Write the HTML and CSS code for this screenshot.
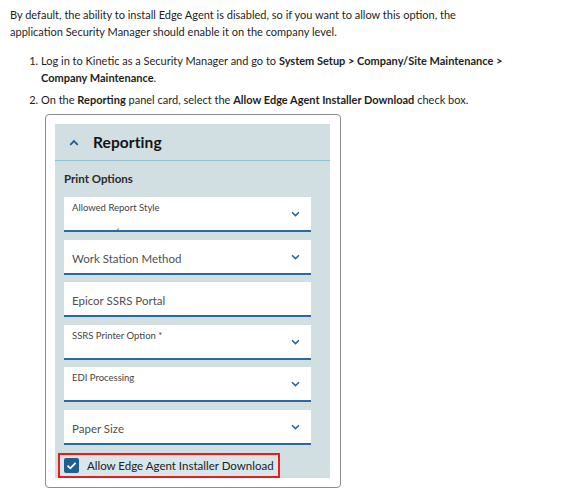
FILE: index.html
```html
<!DOCTYPE html>
<html lang="en">
<head>
<meta charset="utf-8">
<title>Edge Agent</title>
<link rel="stylesheet" href="styles.css">
</head>
<body>
<div class="doc">
<p class="intro">By default, the ability to install Edge Agent is disabled, so if you want to allow this option, the application Security Manager should enable it on the company level.</p>
<ol class="steps">
  <li class="step">Log in to Kinetic as a Security Manager and go to <b>System Setup &gt; Company/Site Maintenance &gt; Company Maintenance</b>.</li>
  <li class="step">
    <div>On the <b>Reporting</b> panel card, select the <b>Allow Edge Agent Installer Download</b> check box.</div>
    <div class="card">
      <div class="panel">
        <div class="panel-head">
          <svg class="caret-up" width="10" height="7" viewBox="0 0 10 7"><path d="M1.2 5.8 L5 2 L8.8 5.8" fill="none" stroke="#1f5f8f" stroke-width="1.8"/></svg>
          <span class="panel-title">Reporting</span>
        </div>
        <div class="panel-body">
          <div class="group-title">Print Options</div>
          <div class="fields">
            <div class="field filled">
              <span class="label-small">Allowed Report Style</span>
              <span class="tick">ˏ</span>
              <svg class="chev" width="9" height="6" viewBox="0 0 9 6"><path d="M1 1.2 L4.5 4.6 L8 1.2" fill="none" stroke="#2a6496" stroke-width="1.5"/></svg>
            </div>
            <div class="field">
              <span class="placeholder">Work Station Method</span>
              <svg class="chev" width="9" height="6" viewBox="0 0 9 6"><path d="M1 1.2 L4.5 4.6 L8 1.2" fill="none" stroke="#2a6496" stroke-width="1.5"/></svg>
            </div>
            <div class="field">
              <span class="placeholder">Epicor SSRS Portal</span>
            </div>
            <div class="field filled">
              <span class="label-small">SSRS Printer Option *</span>
              <svg class="chev" width="9" height="6" viewBox="0 0 9 6"><path d="M1 1.2 L4.5 4.6 L8 1.2" fill="none" stroke="#2a6496" stroke-width="1.5"/></svg>
            </div>
            <div class="field filled">
              <span class="label-small">EDI Processing</span>
              <svg class="chev" width="9" height="6" viewBox="0 0 9 6"><path d="M1 1.2 L4.5 4.6 L8 1.2" fill="none" stroke="#2a6496" stroke-width="1.5"/></svg>
            </div>
            <div class="field">
              <span class="placeholder">Paper Size</span>
              <svg class="chev" width="9" height="6" viewBox="0 0 9 6"><path d="M1 1.2 L4.5 4.6 L8 1.2" fill="none" stroke="#2a6496" stroke-width="1.5"/></svg>
            </div>
          </div>
          <div class="check-row">
            <span class="checkbox"><svg width="15" height="15" viewBox="0 0 15 15"><path d="M3.5 7.6 L6.3 10.3 L11.6 4.8" fill="none" stroke="#ffffff" stroke-width="1.8"/></svg></span>
            <span class="check-label">Allow Edge Agent Installer Download</span>
          </div>
        </div>
      </div>
    </div>
  </li>
</ol>
</div>
</body>
</html>
```
FILE: styles.css
```css
html, body {
  margin: 0;
  padding: 0;
  background: #ffffff;
}
body {
  font-family: Lato, "Open Sans", sans-serif;
  font-size: 11px;
  line-height: 17px;
  color: #1e1e1e;
  padding: 6px 0 0 10px;
}
.doc {
  width: 498px;
}
.intro {
  margin: 0 0 12px 0;
}
.steps {
  margin: 0;
  padding-left: 31px;
}
.step {
  margin-bottom: 5px;
  padding-left: 0;
}
.step b {
  font-weight: 700;
}
.card {
  margin: 6px 0 0 4px;
  width: 275px;
  height: 354px;
  border: 1px solid #8c8c8c;
  border-radius: 4px;
  padding: 9px 10px 9px 9px;
}
.panel {
  background: #d1dee2;
  height: 100%;
  display: flex;
  flex-direction: column;
}
.panel-head {
  height: 36px;
  border-bottom: 1px solid #8ec3cf;
  display: flex;
  align-items: center;
  padding-left: 14px;
  gap: 14px;
}
.caret-up {
  display: block;
}
.panel-title {
  font-size: 15.5px;
  font-weight: 700;
  color: #141414;
  letter-spacing: 0.1px;
}
.panel-body {
  padding: 10px 19px 0 9px;
}
.group-title {
  font-size: 11.5px;
  font-weight: 700;
  color: #2a2a2a;
  line-height: 16px;
  margin-bottom: 10px;
}
.fields {
  display: flex;
  flex-direction: column;
  gap: 7.6px;
}
.field {
  position: relative;
  height: 33px;
  background: #ffffff;
  border-bottom: 2px solid #2a6aa0;
  display: flex;
  align-items: center;
  padding-left: 8px;
}
.field.filled {
  align-items: flex-start;
}
.label-small {
  font-size: 9.5px;
  color: #444444;
  line-height: 12px;
  margin-top: 5px;
}
.placeholder {
  font-size: 11.5px;
  color: #505050;
  margin-top: 4px;
}
.tick {
  position: absolute;
  left: 52px;
  bottom: -3px;
  font-size: 10px;
  color: #333333;
}
.chev {
  position: absolute;
  right: 11px;
  top: 14px;
}
.check-row {
  margin: 8px 0 0 -6px;
  width: 214px;
  height: 21px;
  border: 2px solid #e51d1d;
  background: #d8e6ea;
  display: flex;
  align-items: center;
  padding-left: 4px;
  gap: 8px;
}
.checkbox {
  width: 15px;
  height: 15px;
  background: #1f5f8f;
  border-radius: 2px;
  display: flex;
}
.checkbox svg {
  display: block;
}
.check-label {
  font-size: 11.5px;
  color: #222222;
}
```
